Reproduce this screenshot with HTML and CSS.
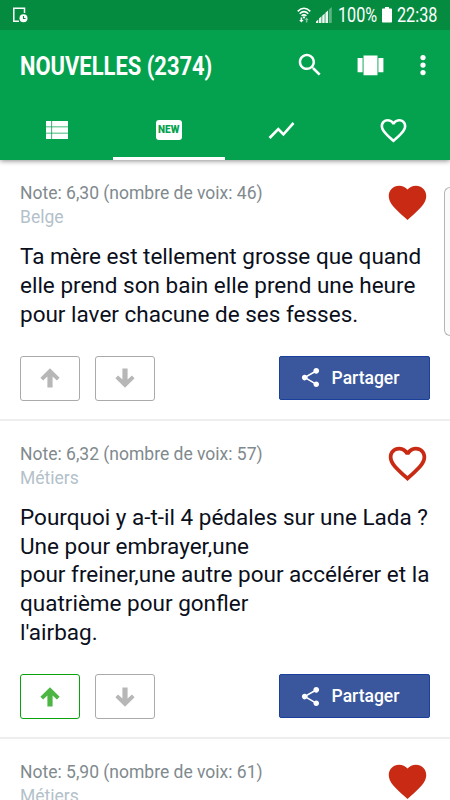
FILE: index.html
```html
<!DOCTYPE html>
<html lang="fr">
<head>
<meta charset="utf-8">
<title>Nouvelles</title>
<link rel="stylesheet" href="styles.css">
</head>
<body>
<svg width="0" height="0" class="defs">
  <symbol id="heart" viewBox="0 0 24 24"><path d="M12 21.35l-1.45-1.32C5.4 15.36 2 12.28 2 8.5 2 5.42 4.42 3 7.5 3c1.74 0 3.41.81 4.5 2.09C13.09 3.81 14.76 3 16.5 3 19.58 3 22 5.42 22 8.5c0 3.78-3.4 6.86-8.55 11.54L12 21.35z"/></symbol>
  <symbol id="heart-line" viewBox="0 0 24 24"><path d="M16.5 3c-1.74 0-3.41.81-4.5 2.09C10.91 3.81 9.24 3 7.5 3 4.42 3 2 5.42 2 8.5c0 3.78 3.4 6.86 8.55 11.54L12 21.35l1.45-1.32C18.6 15.36 22 12.28 22 8.5 22 5.42 19.58 3 16.5 3zm-4.4 15.55l-.1.1-.1-.1C7.14 14.24 4 11.39 4 8.5 4 6.5 5.5 5 7.5 5c1.54 0 3.04.99 3.57 2.36h1.87C13.46 5.99 14.96 5 16.5 5c2 0 3.5 1.5 3.5 3.5 0 2.89-3.14 5.74-7.9 10.05z"/></symbol>
  <symbol id="arrow" viewBox="0 0 20 20"><path d="M10 .3L19.6 9.8l-2.7 2.7-4.3-4.1v11.2H7.4V8.4l-4.3 4.1L.4 9.8z"/></symbol>
  <symbol id="share" viewBox="0 0 24 24"><path d="M18 16.08c-.76 0-1.44.3-1.96.77L8.91 12.7c.05-.23.09-.46.09-.7s-.04-.47-.09-.7l7.05-4.11c.54.5 1.25.81 2.04.81 1.66 0 3-1.34 3-3s-1.34-3-3-3-3 1.34-3 3c0 .24.04.47.09.7L8.04 9.81C7.5 9.31 6.79 9 6 9c-1.66 0-3 1.34-3 3s1.34 3 3 3c.79 0 1.5-.31 2.04-.81l7.12 4.16c-.05.21-.08.43-.08.65 0 1.61 1.31 2.92 2.92 2.92s2.92-1.31 2.92-2.92-1.31-2.92-2.92-2.92z"/></symbol>
</svg>

<header class="header">
  <div class="status">
    <svg class="device" viewBox="0 0 16 16"><path d="M6 14.2H.8V1.2h10.700V6" fill="none" stroke="#fff" stroke-width="1.500"/><circle cx="10.500" cy="11.300" r="4" fill="#fff"/><path d="M10.500 9v2.500h2" fill="none" stroke="#048b40" stroke-width="1.100"/></svg>
    <div class="status-right">
      <svg class="wifi" viewBox="0 0 14 16"><g fill="none" stroke="#fff" stroke-width="1.500"><path d="M.7 4.400Q7-1.800 13.300 4.400M2.700 6.700Q7 2.600 11.300 6.700M4.600 8.900Q7 6.800 9.400 8.900"/></g><circle cx="7" cy="10.400" r="1.100" fill="#fff"/><path d="M3.600 10.500h1.600v2.500h1.500L4.400 15.600 2.100 13h1.500z" fill="#fff"/><path d="M8.900 15.500v-2.600H7.600L9.600 10.500l2 2.400h-1.200v2.600z" fill="#fff" opacity=".5"/></svg>
      <svg class="signal" viewBox="0 0 16 16"><path d="M0 16v-1.500L2.300 12.500V16zM3 16v-4.500l2.500-2.300V16zM6.200 16V8.800l2.500-2.400V16zM9.400 16V5.800l2.600-2.400V16z" fill="#fff" opacity=".92"/><path d="M12.800 16V2.600L15.800 0v16z" fill="#fff" opacity=".35"/></svg>
      <span class="percent"><span>100%</span></span>
      <svg class="battery" viewBox="0 0 10 16"><path d="M3 0h4v1.500h2.200q.8 0 .8.800v12.400q0 .8-.8.800H.8Q0 15.500 0 14.700V2.300q0-.8.8-.8H3z" fill="#fff"/></svg>
      <span class="clock"><span>22:38</span></span>
    </div>
  </div>
  <div class="toolbar">
    <h1><span>NOUVELLES (2374)</span></h1>
    <div class="actions">
      <svg viewBox="0 0 24 24"><path d="M15.500 14h-.79l-.28-.27C15.410 12.590 16 11.110 16 9.500 16 5.910 13.090 3 9.500 3S3 5.910 3 9.500 5.910 16 9.500 16c1.610 0 3.090-.59 4.230-1.570l.27.28v.79l5 4.990L20.490 19l-4.990-5zm-6 0C7.010 14 5 11.990 5 9.500S7.010 5 9.500 5 14 7.010 14 9.500 11.990 14 9.500 14z"/></svg>
      <svg viewBox="0 0 24 24"><path d="M6.600 19.500h10.800V4.300H6.600zM2 17.200h3.900V6.100H2zM18.100 6.100v11.100H22V6.100z"/></svg>
      <svg viewBox="0 0 24 24"><circle cx="12" cy="6" r="2.100"/><circle cx="12" cy="12" r="2.100"/><circle cx="12" cy="18" r="2.100"/></svg>
    </div>
  </div>
  <nav class="tabs">
    <div class="tab"><svg class="list" viewBox="0 0 22 18"><path d="M0 0h5.300v5.400H0zM6.100 0H22v5.400H6.100zM0 6.300h5.300v5.400H0zM6.100 6.300H22v5.400H6.100zM0 12.600h5.300V18H0zM6.100 12.600H22V18H6.100z"/></svg></div>
    <div class="tab active"><span class="new">NEW</span></div>
    <div class="tab"><svg viewBox="0 0 24 24"><path d="M3.500 18.490l6-6.010 4 4L22 6.920l-1.410-1.410-7.090 7.970-4-4L2 16.990z"/></svg></div>
    <div class="tab"><svg viewBox="0 0 24 24"><use href="#heart-line"/></svg></div>
  </nav>
</header>

<main>
  <article class="joke">
    <div class="meta">
      <div><p class="note">Note: 6,30 (nombre de voix: 46)</p><p class="category">Belge</p></div>
      <svg class="fav"><use href="#heart"/></svg>
    </div>
    <p class="text">Ta mère est tellement grosse que quand<br>elle prend son bain elle prend une heure<br>pour laver chacune de ses fesses.</p>
    <div class="buttons">
      <button class="vote"><svg><use href="#arrow"/></svg></button>
      <button class="vote down"><svg><use href="#arrow"/></svg></button>
      <button class="share"><svg><use href="#share"/></svg>Partager</button>
    </div>
  </article>
  <article class="joke">
    <div class="meta">
      <div><p class="note">Note: 6,32 (nombre de voix: 57)</p><p class="category">Métiers</p></div>
      <svg class="fav"><use href="#heart-line"/></svg>
    </div>
    <p class="text">Pourquoi y a-t-il 4 pédales sur une Lada ?<br>Une pour embrayer,une<br>pour freiner,une autre pour accélérer et la<br>quatrième pour gonfler<br>l'airbag.</p>
    <div class="buttons">
      <button class="vote voted"><svg><use href="#arrow"/></svg></button>
      <button class="vote down"><svg><use href="#arrow"/></svg></button>
      <button class="share"><svg><use href="#share"/></svg>Partager</button>
    </div>
  </article>
  <article class="joke">
    <div class="meta">
      <div><p class="note">Note: 5,90 (nombre de voix: 61)</p><p class="category">Métiers</p></div>
      <svg class="fav"><use href="#heart"/></svg>
    </div>
  </article>
</main>
<div class="edge-handle"></div>
</body>
</html>
```
FILE: styles.css
```css
* { box-sizing: border-box; }
html, body { height: 800px; overflow: hidden; }
body { margin: 0; position: relative; background: #fff; font-family: Roboto, sans-serif; color: #0b0f1c; }
p, h1 { margin: 0; }
svg { display: block; flex: none; }
.defs { position: absolute; }
main { height: 640px; overflow: hidden; }

.header { position: relative; height: 160px; background: #04a24f; box-shadow: 0 1px 5px rgba(0, 0, 0, .45); color: #fff; }
.header svg { fill: #fff; }
.status { height: 30px; background: #048b40; display: flex; align-items: center; justify-content: space-between; padding: 0 12px 0 13px; }
.device { width: 16px; height: 16px; }
.status-right { display: flex; align-items: center; }
.wifi { width: 14px; height: 16px; margin-right: 5px; }
.signal { width: 16px; height: 16px; margin-right: 6px; }
.battery { width: 10px; height: 16px; margin: 0 5px; }
.percent, .clock { display: block; font-size: 20px; line-height: 32px; white-space: nowrap; }
.percent { width: 39px; }
.clock { width: 41px; }
.percent span, .clock span { display: inline-block; transform-origin: left; transform: scaleX(.81); }

.toolbar { height: 70px; display: flex; align-items: center; justify-content: space-between; padding: 2px 12px 0 20px; }
h1 { font-size: 26px; font-weight: 700; line-height: 30px; width: 193px; white-space: nowrap; }
h1 span { display: inline-block; transform-origin: left; transform: scaleX(.843); }
.actions { display: flex; align-items: center; margin-top: -2px; }
.actions svg { width: 30px; height: 30px; }
.actions svg:nth-child(2) { width: 31px; height: 31px; margin: 0 22px 0 30px; }

.tabs { height: 60px; display: grid; grid-template-columns: repeat(4, 1fr); }
.tab { display: flex; align-items: center; justify-content: center; border-bottom: 3px solid transparent; padding-top: 3px; }
.tab.active { border-color: #fff; }
.tab svg { width: 31px; height: 31px; }
.tab .list { width: 22px; height: 18px; margin-left: 1px; }
.new { width: 26px; height: 20px; border-radius: 3px; background: #fff; color: #04a24f; font-size: 10px; font-weight: 900; line-height: 20px; text-align: center; }

.joke { padding: 20px 20px 18px; border-bottom: 2px solid #eee; }
.meta { display: flex; justify-content: space-between; height: 62px; }
.note, .category { font-size: 17.5px; line-height: 24px; white-space: nowrap; }
.note { color: #7f8a8e; margin-top: 1px; }
.category { color: #b3c1ca; }
.fav { width: 45px; height: 45px; fill: #c82a13; }
.text { font-size: 22.5px; line-height: 28.75px; white-space: nowrap; }
.buttons { display: flex; margin-top: 27.5px; height: 45px; }
button { font: inherit; padding: 0; display: flex; align-items: center; justify-content: center; }
.vote { width: 60px; height: 45px; margin-right: 15px; background: #fff; border: 1px solid #aaa; border-radius: 3px; }
.vote svg { width: 20px; height: 20px; fill: #b7b7b7; }
.down svg { transform: rotate(180deg); }
.voted { border-color: #0aa30e; }
.voted svg { fill: #4db543; }
.share { width: 151px; height: 44px; margin-left: auto; padding-right: 11px; border: 1px solid #19409a; border-radius: 2px; background: #3a579d; color: #fff; font-size: 17.5px; font-weight: 500; gap: 10px; }
.share svg { width: 23px; height: 23px; fill: #fff; }

.edge-handle { position: absolute; left: 444px; top: 187px; width: 6px; height: 149px; border: 1px solid #b5b5b5; border-right: 0; border-radius: 7px 0 0 7px; background: #fbfbfb; }
```
